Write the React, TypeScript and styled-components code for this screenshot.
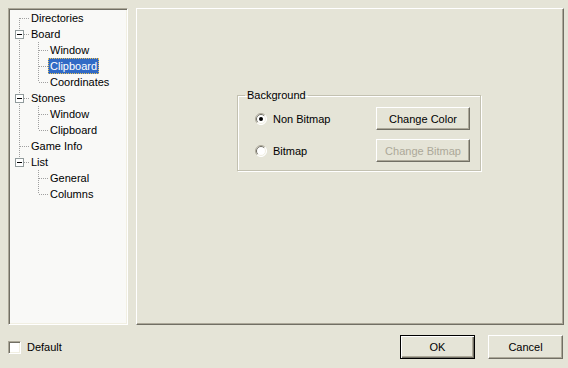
import React from 'react';
import styled, { createGlobalStyle } from 'styled-components';

const GlobalStyle = createGlobalStyle`
  html, body {
    margin: 0;
    padding: 0;
    background: #e5e4d7;
  }
  body {
    font-family: "Liberation Sans", Arial, sans-serif;
    font-size: 11px;
    color: #000;
  }
`;

const Dialog = styled.div`
  width: 568px;
  height: 368px;
  box-sizing: border-box;
  padding: 8px 4px 0 8px;
  display: flex;
  flex-direction: column;
`;

const Main = styled.div`
  display: flex;
  gap: 8px;
  height: 317px;
`;

const TreePane = styled.div`
  width: 120px;
  box-sizing: border-box;
  background: #f9f9f7;
  border: 1px solid;
  border-color: #aca899 #fff #fff #aca899;
  box-shadow: inset 1px 1px #716f64, inset -1px -1px #f1efe2;
  padding: 1px;
`;

const TreeRow = styled.div`
  display: flex;
  height: 16px;
`;

const TreeLabel = styled.span<{ $selected?: boolean }>`
  padding: 0 2px;
  line-height: 16px;
  white-space: nowrap;
  background: ${p => (p.$selected ? '#316ac5' : 'transparent')};
  color: ${p => (p.$selected ? '#fff' : '#000')};
  outline: ${p => (p.$selected ? '1px dotted #e8c25a' : 'none')};
  outline-offset: -1px;
`;

const Panel = styled.div`
  flex: 1;
  box-sizing: border-box;
  border: 1px solid;
  border-color: #fff #716f64 #716f64 #fff;
  box-shadow: inset -1px -1px #aca899;
  padding: 80px 0 0 100px;
`;

const GroupBox = styled.fieldset`
  display: inline-block;
  margin: 0;
  padding: 6px 10px 8px 17px;
  border: 1px solid #c3c1b1;
  box-shadow: 1px 1px #fff, inset 1px 1px #fff;
  min-inline-size: 0;
`;

const Legend = styled.legend`
  margin-left: -10px;
  padding: 0 2px;
  line-height: 12px;
`;

const GroupGrid = styled.div`
  display: grid;
  grid-template-columns: 121px 94px;
  grid-auto-rows: 23px;
  row-gap: 9px;
  align-items: center;
`;

const Choice = styled.label`
  display: flex;
  align-items: center;
  gap: 6px;
`;

const Button = styled.div<{ $w: number; $h: number; $default?: boolean; $disabled?: boolean }>`
  width: ${p => p.$w}px;
  height: ${p => p.$h}px;
  box-sizing: border-box;
  display: flex;
  align-items: center;
  justify-content: center;
  background: #e5e4d7;
  color: ${p => (p.$disabled ? '#aca899' : '#000')};
  border: 1px solid;
  border-color: ${p => (p.$default ? '#000' : '#fff #716f64 #716f64 #fff')};
  box-shadow: ${p =>
    p.$default
      ? 'inset 1px 1px #fff, inset -1px -1px #716f64, inset -2px -2px #aca899'
      : 'inset -1px -1px #aca899'};
`;

const Footer = styled.div`
  display: flex;
  align-items: center;
  margin-top: 10px;
  height: 24px;
`;

const CheckLabel = styled.label`
  display: flex;
  align-items: center;
  gap: 6px;
  flex: 1;
`;

const CheckBox = styled.span`
  width: 13px;
  height: 13px;
  box-sizing: border-box;
  background: #fff;
  border: 1px solid;
  border-color: #aca899 #fff #fff #aca899;
  box-shadow: inset 1px 1px #716f64, inset -1px -1px #f1efe2;
`;

const FooterButtons = styled.div`
  display: flex;
  gap: 13px;
  margin-right: 1px;
`;

type Guide = 'first' | 'tee' | 'last' | 'pipe' | 'blank';

const Dots = '#a0a0a0';

function GuideCell({ kind, box }: { kind: Guide; box?: boolean }) {
  const up = kind === 'tee' || kind === 'last' || kind === 'pipe';
  const down = kind === 'first' || kind === 'tee' || kind === 'pipe';
  const across = kind !== 'pipe' && kind !== 'blank';
  return (
    <svg width="19" height="16" style={{ flex: 'none' }} shapeRendering="crispEdges">
      {up && <line x1="9.5" y1="0" x2="9.5" y2="8" stroke={Dots} strokeDasharray="1 1" />}
      {down && <line x1="9.5" y1="8" x2="9.5" y2="16" stroke={Dots} strokeDasharray="1 1" />}
      {across && <line x1="10" y1="8.5" x2="19" y2="8.5" stroke={Dots} strokeDasharray="1 1" />}
      {box && (
        <>
          <rect x="5.5" y="4.5" width="8" height="8" fill="#fff" stroke="#919b9c" />
          <line x1="7" y1="8.5" x2="12" y2="8.5" stroke="#000" />
        </>
      )}
    </svg>
  );
}

type Node = { label: string; guides: { kind: Guide; box?: boolean }[]; selected?: boolean };

const tree: Node[] = [
  { label: 'Directories', guides: [{ kind: 'first' }] },
  { label: 'Board', guides: [{ kind: 'tee', box: true }] },
  { label: 'Window', guides: [{ kind: 'pipe' }, { kind: 'tee' }] },
  { label: 'Clipboard', guides: [{ kind: 'pipe' }, { kind: 'tee' }], selected: true },
  { label: 'Coordinates', guides: [{ kind: 'pipe' }, { kind: 'last' }] },
  { label: 'Stones', guides: [{ kind: 'tee', box: true }] },
  { label: 'Window', guides: [{ kind: 'pipe' }, { kind: 'tee' }] },
  { label: 'Clipboard', guides: [{ kind: 'pipe' }, { kind: 'last' }] },
  { label: 'Game Info', guides: [{ kind: 'tee' }] },
  { label: 'List', guides: [{ kind: 'last', box: true }] },
  { label: 'General', guides: [{ kind: 'blank' }, { kind: 'tee' }] },
  { label: 'Columns', guides: [{ kind: 'blank' }, { kind: 'last' }] },
];

function Radio({ checked }: { checked?: boolean }) {
  return (
    <svg width="12" height="12" style={{ flex: 'none' }}>
      <circle cx="6" cy="6" r="5.5" fill="#fff" />
      <path d="M2.1 9.9 A5.5 5.5 0 0 1 9.9 2.1" fill="none" stroke="#aca899" />
      <path d="M9.9 2.1 A5.5 5.5 0 0 1 2.1 9.9" fill="none" stroke="#fff" />
      <path d="M2.8 9.2 A4.5 4.5 0 0 1 9.2 2.8" fill="none" stroke="#716f64" />
      <path d="M9.2 2.8 A4.5 4.5 0 0 1 2.8 9.2" fill="none" stroke="#f1efe2" />
      {checked && <circle cx="6" cy="6" r="2" fill="#000" />}
    </svg>
  );
}

export default function App() {
  return (
    <>
      <GlobalStyle />
      <Dialog>
        <Main>
          <TreePane>
            {tree.map((n, i) => (
              <TreeRow key={i}>
                {n.guides.map((g, j) => (
                  <GuideCell key={j} kind={g.kind} box={g.box} />
                ))}
                <TreeLabel $selected={n.selected}>{n.label}</TreeLabel>
              </TreeRow>
            ))}
          </TreePane>
          <Panel>
            <GroupBox>
              <Legend>Background</Legend>
              <GroupGrid>
                <Choice>
                  <Radio checked />
                  Non Bitmap
                </Choice>
                <Button $w={94} $h={23}>Change Color</Button>
                <Choice>
                  <Radio />
                  Bitmap
                </Choice>
                <Button $w={94} $h={23} $disabled>Change Bitmap</Button>
              </GroupGrid>
            </GroupBox>
          </Panel>
        </Main>
        <Footer>
          <CheckLabel>
            <CheckBox />
            Default
          </CheckLabel>
          <FooterButtons>
            <Button $w={75} $h={24} $default>OK</Button>
            <Button $w={75} $h={24}>Cancel</Button>
          </FooterButtons>
        </Footer>
      </Dialog>
    </>
  );
}
